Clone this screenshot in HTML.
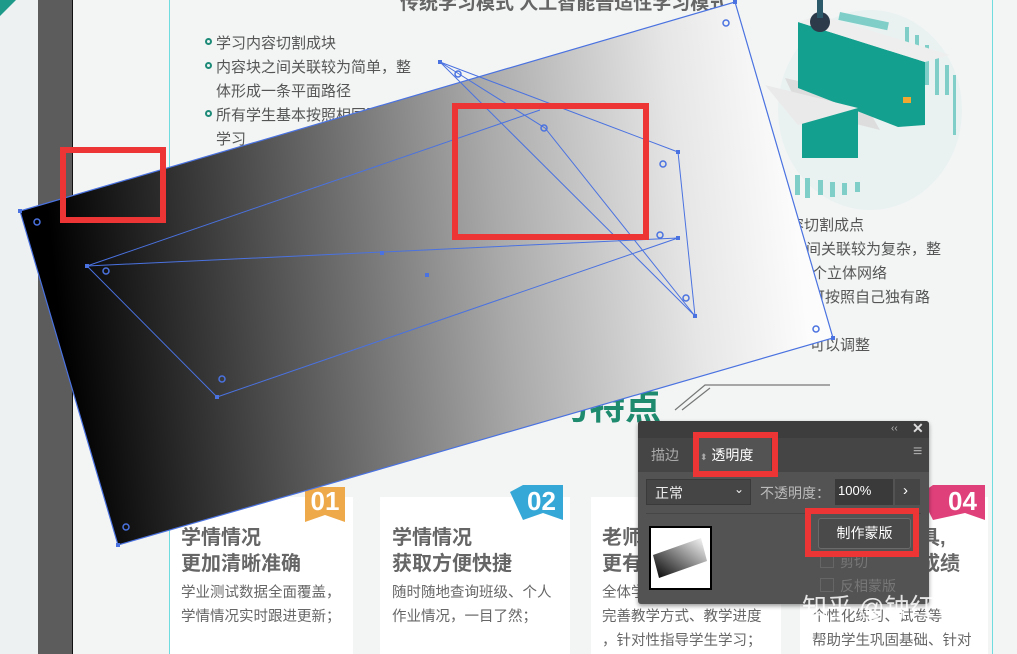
<!DOCTYPE html>
<html><head><meta charset="utf-8"><style>
*{margin:0;padding:0;box-sizing:border-box}
body{width:1017px;height:654px;overflow:hidden;position:relative;background:#f3f5f5;font-family:"Liberation Sans","Noto Sans CJK SC",sans-serif}
.a{position:absolute;white-space:nowrap}
.b{font-size:15px;color:#555}
.dot{position:absolute;width:7px;height:7px;border:2px solid #1e8a78;border-radius:50%}
.card{position:absolute;background:#fff;top:497px;height:157px}
.ct{position:absolute;font-size:20px;font-weight:bold;color:#666;line-height:26px}
.cb{position:absolute;font-size:14.5px;color:#666;line-height:24px}
.badge{position:absolute;color:#fff;font-weight:bold;font-size:26px;text-align:center;line-height:34px}
</style></head><body>
<div class="a" style="left:0;top:0;width:38px;height:654px;background:#eef1f1"></div>
<div class="a" style="left:38px;top:0;width:34px;height:654px;background:#5c5c5c"></div>
<div class="a" style="left:72px;top:0;width:1px;height:654px;background:#111"></div>
<div class="a" style="left:169px;top:0;width:1px;height:654px;background:#6fdde0"></div>
<div class="a" style="left:992px;top:0;width:1px;height:654px;background:#6fdde0"></div>
<svg class="a" style="left:0;top:0" width="20" height="20"><polygon points="0,0 16,0 0,16" fill="#1e9a8a"/></svg>

<div class="a" style="left:400px;top:-12px;font-size:19px;font-weight:bold;color:#666">传统学习模式 人工智能普适性学习模式</div>
<div class="dot" style="left:205px;top:38px"></div><div class="a b" style="left:216px;top:32px">学习内容切割成块</div>
<div class="dot" style="left:205px;top:62px"></div><div class="a b" style="left:216px;top:56px">内容块之间关联较为简单，整</div>
<div class="a b" style="left:216px;top:80px">体形成一条平面路径</div>
<div class="dot" style="left:205px;top:110px"></div><div class="a b" style="left:216px;top:104px">所有学生基本按照相同路径</div>
<div class="a b" style="left:216px;top:128px">学习</div>
<div class="a b" style="left:789px;top:214px">容切割成点</div>
<div class="a b" style="left:806px;top:238px">间关联较为复杂，整</div>
<div class="a b" style="left:812px;top:262px">个立体网络</div>
<div class="a b" style="left:810px;top:286px">可按照自己独有路</div>
<div class="a b" style="left:810px;top:334px">可以调整</div>
<div class="a" style="left:517px;top:378px;font-size:36px;font-weight:bold;color:#1e8a6e">学习特点</div>
<svg class="a" style="left:670px;top:380px" width="170" height="35"><path d="M5,30 L35,5 L160,5 M12,30 L40,8" stroke="#777" fill="none" stroke-width="1.2"/></svg>

<svg class="a" style="left:740px;top:0" width="250" height="220">
<ellipse cx="130" cy="110" rx="92" ry="100" fill="#eaf1f1"/>
<g fill="#7fcfc8">
<rect x="165" y="27" width="4" height="40"/><rect x="175" y="35" width="4" height="40"/><rect x="185" y="45" width="4" height="40"/><rect x="195" y="55" width="4" height="40"/><rect x="205" y="65" width="4" height="30"/><rect x="213" y="75" width="3" height="60"/>
<rect x="55" y="175" width="5" height="20"/><rect x="65" y="178" width="5" height="20"/><rect x="78" y="180" width="5" height="15"/><rect x="90" y="182" width="5" height="15"/><rect x="102" y="183" width="5" height="12"/><rect x="115" y="182" width="5" height="10"/>
<rect x="100" y="12" width="50" height="8" transform="rotate(12 100 12)"/>
</g>
<polygon points="45,78 120,95 140,130 60,110" fill="#ddd"/>
<polygon points="58,22 185,62 185,125 158,127 58,88" fill="#14a08e"/>
<polygon points="58,22 80,15 210,55 185,62" fill="#eee"/>
<polygon points="62,110 118,100 118,158 62,158" fill="#14a08e"/>
<polygon points="25,85 118,108 58,125" fill="#eaeaea"/>
<circle cx="80" cy="22" r="10" fill="#2c3a4a"/><rect x="77" y="0" width="6" height="18" fill="#2c5a6a"/>
<rect x="163" y="97" width="8" height="6" fill="#f0a830"/>
</svg>

<div class="card" style="left:170px;width:183px"></div>
<div class="card" style="left:380px;width:190px"></div>
<div class="card" style="left:591px;width:190px"></div>
<div class="card" style="left:800px;width:188px"></div>
<svg class="a" style="left:290px;top:482px" width="700" height="45">
<polygon points="15,5 55,5 55,40 35,33 15,40" fill="#eea94a"/>
<polygon points="220,10 233,3 273,3 273,38 253,31 233,38" fill="#35a8d8"/>
<polygon points="630,12 643,3 695,3 695,38 675,31 643,38" fill="#e0407a"/>
</svg>
<div class="badge" style="left:305px;top:484px;width:40px">01</div>
<div class="badge" style="left:520px;top:484px;width:43px">02</div>
<div class="badge" style="left:940px;top:484px;width:45px">04</div>
<div class="ct" style="left:181px;top:525px">学情情况<br>更加清晰准确</div>
<div class="cb" style="left:181px;top:581px">学业测试数据全面覆盖，<br>学情情况实时跟进更新；</div>
<div class="ct" style="left:392px;top:525px">学情情况<br>获取方便快捷</div>
<div class="cb" style="left:392px;top:581px">随时随地查询班级、个人<br>作业情况，一目了然；</div>
<div class="ct" style="left:602px;top:525px">老师<br>更有</div>
<div class="cb" style="left:602px;top:581px">全体学<br>完善教学方式、教学进度<br>，针对性指导学生学习；</div>
<div class="ct" style="left:920px;top:525px">具,<br>成绩</div>
<div class="cb" style="left:812px;top:581px">&nbsp;&nbsp;&nbsp;&nbsp;&nbsp;&nbsp;&nbsp;&nbsp;&nbsp;&nbsp;&nbsp;&nbsp;&nbsp;&nbsp;对学情的<br>个性化练习、试卷等<br>帮助学生巩固基础、针对</div>

<svg class="a" style="left:0;top:0" width="1017" height="654">
<defs><linearGradient id="g" gradientUnits="userSpaceOnUse" x1="60" y1="330" x2="800" y2="250">
<stop offset="0" stop-color="#000"/><stop offset="0.3" stop-color="#555"/><stop offset="0.6" stop-color="#aaa"/><stop offset="0.85" stop-color="#e6e6e6"/><stop offset="1" stop-color="#fcfcfc"/></linearGradient></defs>
<polygon points="20,211 735,2 833,338 118,545" fill="url(#g)" stroke="#4a72e0" stroke-width="1.2"/>
<g stroke="#4a72e0" fill="none" stroke-width="1">
<path d="M87,266 L678,238 M87,266 L217,397 L678,238"/>
<path d="M87,266 L540,110"/>
<path d="M440,62 L678,152 L695,316 L440,62"/>
<path d="M440,62 L545,128 L695,316"/>
</g>
<g fill="#4a72e0">
<rect x="18" y="209" width="4" height="4"/><rect x="733" y="0" width="4" height="4"/><rect x="831" y="336" width="4" height="4"/><rect x="116" y="543" width="4" height="4"/>
<rect x="85" y="264" width="4" height="4"/><rect x="215" y="395" width="4" height="4"/><rect x="676" y="236" width="4" height="4"/><rect x="676" y="150" width="4" height="4"/><rect x="693" y="314" width="4" height="4"/><rect x="438" y="60" width="4" height="4"/><rect x="380" y="251" width="4" height="4"/><rect x="425" y="273" width="4" height="4"/>
</g>
<g fill="none" stroke="#4a72e0" stroke-width="1.5">
<circle cx="37" cy="222" r="3"/><circle cx="106" cy="271" r="3"/><circle cx="222" cy="379" r="3"/><circle cx="126" cy="527" r="3"/><circle cx="458" cy="74" r="3"/><circle cx="544" cy="128" r="3"/><circle cx="663" cy="164" r="3"/><circle cx="660" cy="235" r="3"/><circle cx="686" cy="298" r="3"/><circle cx="726" cy="23" r="3"/><circle cx="816" cy="329" r="3"/>
</g>
<g fill="none" stroke="#ee3535" stroke-width="6">
<rect x="63" y="150" width="100" height="70"/>
<rect x="455" y="106" width="191" height="131"/>
</g>
</svg>

<div class="a" style="left:638px;top:421px;width:291px;height:183px;background:#535353;border-radius:3px;box-shadow:0 2px 4px rgba(0,0,0,.4)">
 <div class="a" style="left:0;top:0;width:291px;height:17px;background:#3d3d3d;border-radius:3px 3px 0 0"></div>
 <div class="a" style="left:253px;top:2px;color:#bbb;font-size:10px">‹‹</div>
 <div class="a" style="left:274px;top:-1px;color:#ddd;font-size:14px;font-weight:bold">✕</div>
 <div class="a" style="left:0;top:17px;width:291px;height:34px;background:#454545"></div>
 <div class="a" style="left:13px;top:24px;color:#aaa;font-size:14px">描边</div>
 <div class="a" style="left:59px;top:17px;width:74px;height:34px;background:#535353"></div>
 <div class="a" style="left:62px;top:24px;color:#fff;font-size:14px"><span style="font-size:9px;color:#aaa">⬍</span> 透明度</div>
 <div class="a" style="left:275px;top:22px;color:#aaa;font-size:16px">≡</div>
 <div class="a" style="left:8px;top:58px;width:105px;height:26px;background:#454545;border:1px solid #3a3a3a;color:#eee;font-size:14px;padding:3px 8px">正常<span style="position:absolute;right:6px;top:2px;font-size:12px">⌄</span></div>
 <div class="a" style="left:122px;top:62px;color:#bbb;font-size:14px">不透明度：</div>
 <div class="a" style="left:197px;top:58px;width:58px;height:26px;background:#3a3a3a;color:#fff;font-size:13px;padding:4px 3px">100%</div>
 <div class="a" style="left:257px;top:58px;width:25px;height:26px;background:#454545;color:#fff;font-size:15px;padding:3px 8px">›</div>
 <div class="a" style="left:8px;top:92px;width:275px;height:1px;background:#464646"></div>
 <div class="a" style="left:11px;top:105px;width:63px;height:64px;background:#fff;border:2px solid #000">
  <svg width="59" height="60"><defs><linearGradient id="t" x1="0" y1="1" x2="1" y2="0"><stop offset="0" stop-color="#000"/><stop offset="1" stop-color="#fff"/></linearGradient></defs><polygon points="2,27 50,10 56,33 8,50" fill="url(#t)"/></svg>
 </div>
 <div class="a" style="left:180px;top:97px;width:93px;height:31px;border:1px solid #6a6a6a;border-radius:3px;background:#4a4a4a;color:#fff;font-size:14px;text-align:center;line-height:29px">制作蒙版</div>
 <div class="a" style="left:182px;top:133px;width:14px;height:14px;border:1px solid #666"></div>
 <div class="a" style="left:202px;top:131px;color:#777;font-size:14px">剪切</div>
 <div class="a" style="left:182px;top:157px;width:14px;height:14px;border:1px solid #666"></div>
 <div class="a" style="left:202px;top:155px;color:#777;font-size:14px">反相蒙版</div>
</div>
<svg class="a" style="left:0;top:0" width="1017" height="654"><g fill="none" stroke="#ee3535" stroke-width="6">
<rect x="696" y="435" width="79" height="39"/>
<rect x="808" y="511" width="108" height="43"/></g></svg>
<div class="a" style="left:802px;top:588px;font-size:25px;color:rgba(255,255,255,.85)">知乎 @钟红安</div>
</body></html>
